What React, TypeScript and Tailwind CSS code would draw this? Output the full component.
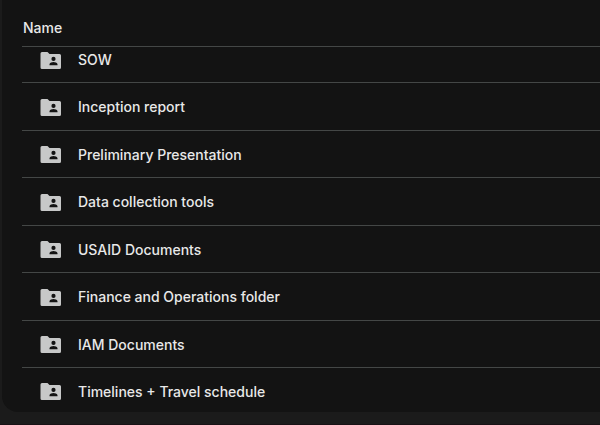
const folders = [
  'SOW',
  'Inception report',
  'Preliminary Presentation',
  'Data collection tools',
  'USAID Documents',
  'Finance and Operations folder',
  'IAM Documents',
  'Timelines + Travel schedule',
];

function rowHeight(index: number) {
  if (index === 0) return 'h-9 [&>td]:pb-2';
  if (index === folders.length - 1) return 'h-[45px] border-b-0 [&>td]:pt-1';
  return index % 2 === 1 ? 'h-12 [&>td]:pt-0.5' : 'h-[47px] [&>td]:pt-0.5';
}

function SharedFolderIcon() {
  return (
    <svg viewBox="0 0 21 17" className="block h-[17px] w-[21px]" aria-hidden="true">
      <path
        fill="#c7c8c8"
        fillRule="evenodd"
        d="M2 0h5.500l2 2H19.500A1.500 1.500 0 0 1 21 3.500v12A1.500 1.500 0 0 1 19.500 17H2A1.500 1.500 0 0 1 .5 15.500v-14A1.500 1.500 0 0 1 2 0ZM13.500 4.800a2.100 2.100 0 1 0 0 4.200 2.100 2.100 0 0 0 0-4.200ZM9.500 13.300h8v-1c0-1.500-2.700-2.300-4-2.300s-4 .8-4 2.300Z"
      />
    </svg>
  );
}

export default function App() {
  return (
    <main className="min-h-screen border-b border-[#181115] bg-[#1b1b1b] pl-0.5 font-['Inter','Liberation_Sans',sans-serif] text-sm font-medium text-[#e8e8e8]">
      <section className="rounded-bl-2xl bg-[#131313] pl-5">
        <table className="w-full border-collapse text-left">
          <thead>
            <tr className="h-[46px] border-b border-[#444746]">
              <th scope="col" colSpan={2} className="p-0 pt-2.5 pl-px font-medium">
                Name
              </th>
            </tr>
          </thead>
          <tbody>
            {folders.map((name, index) => (
              <tr key={name} className={`border-b border-[#444746] ${rowHeight(index)}`}>
                <td className="w-14 p-0 pl-[18px]">
                  <SharedFolderIcon />
                </td>
                <td className="p-0">{name}</td>
              </tr>
            ))}
          </tbody>
        </table>
      </section>
    </main>
  );
}
